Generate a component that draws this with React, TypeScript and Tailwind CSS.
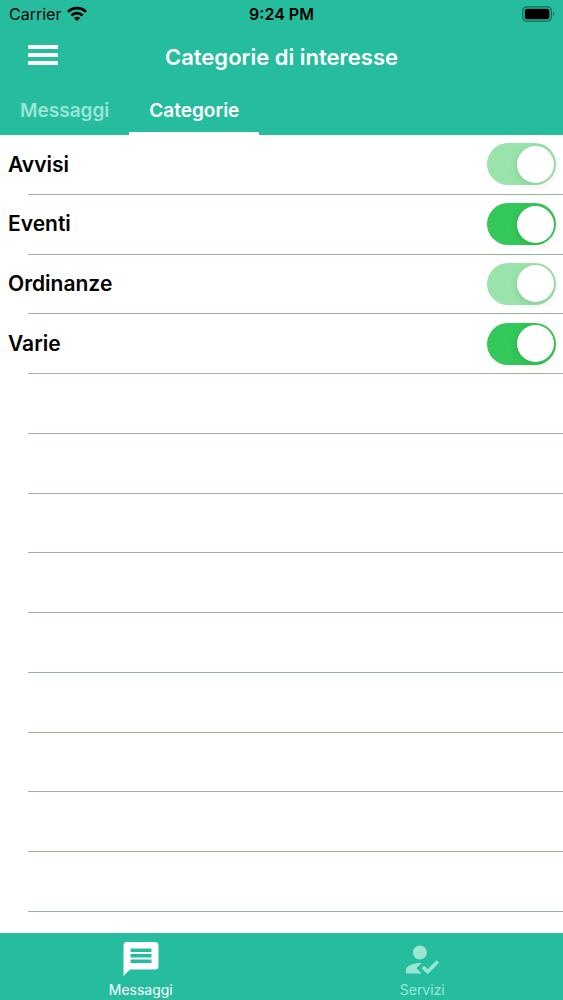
import React, { useState } from 'react';

interface Category {
  id: string;
  name: string;
  locked: boolean;
}

const CATEGORIES: Category[] = [
  { id: 'avvisi', name: 'Avvisi', locked: true },
  { id: 'eventi', name: 'Eventi', locked: false },
  { id: 'ordinanze', name: 'Ordinanze', locked: true },
  { id: 'varie', name: 'Varie', locked: false },
];

const EMPTY_ROWS = 9;

const StatusBar = () => (
  <div className="grid grid-cols-3 items-center h-7 px-2 text-black">
    <div className="flex items-center gap-1.5 pl-px text-base">
      <span>Carrier</span>
      <svg viewBox="0 0 20 15" className="w-5 h-4" fill="none" stroke="currentColor" strokeWidth="2.7">
        <path d="M1 5.4C6 .4 14 .4 19 5.4" />
        <path d="M4.4 9C7.6 5.9 12.4 5.9 15.6 9" />
        <path d="M10 14.6L6.9 11.5C8.6 9.9 11.4 9.9 13.1 11.5Z" fill="currentColor" stroke="none" />
      </svg>
    </div>
    <span className="text-center text-base font-semibold">9:24 PM</span>
    <svg viewBox="0 0 33 16" className="w-[33px] h-4 justify-self-end">
      <rect x="0.8" y="0.8" width="28.6" height="14.4" rx="4" fill="none" stroke="#0b6b58" strokeWidth="1.2" />
      <rect x="2.8" y="2.8" width="24.6" height="10.4" rx="2" />
      <path d="M31 5.5c1.6.8 1.6 4.2 0 5z" fill="#0b6b58" />
    </svg>
  </div>
);

interface SwitchProps {
  id: string;
  checked: boolean;
  disabled: boolean;
  onChange: () => void;
}

const Switch: React.FC<SwitchProps> = ({ id, checked, disabled, onChange }) => (
  <input
    id={id}
    type="checkbox"
    role="switch"
    checked={checked}
    disabled={disabled}
    onChange={onChange}
    className="flex items-center appearance-none w-[69px] h-[42px] p-[2px] rounded-full bg-gray-200 checked:bg-[#34c759] checked:disabled:bg-[#9ae3ac] checked:justify-end before:size-[37px] before:rounded-full before:bg-white before:shadow-[0_2px_8px_rgba(0,0,0,0.12)]"
  />
);

const MessageIcon = () => (
  <svg viewBox="0 0 36 34" className="w-9 h-[34px]" fill="currentColor" fillRule="evenodd">
    <path d="M4 0h28a3.5 3.5 0 0 1 3.5 3.5v20.5a3.5 3.5 0 0 1-3.5 3.5H7L.5 34V3.5A3.5 3.5 0 0 1 4 0zM7.5 6.5v3.5h21v-3.5zM7.5 12v3.5h21v-3.5zM7.5 17.5v3.5h21v-3.5z" />
  </svg>
);

const ServicesIcon = () => (
  <svg viewBox="2.5 2 20 19.5" className="w-[35px] h-[34px]" fill="currentColor">
    <circle cx="11" cy="8" r="4" />
    <path d="M9 17l3-2.94c-.39-.04-.68-.06-1-.06-2.67 0-8 1.34-8 4v2h9z" />
    <path d="M15.47 20.5L12 17l1.4-1.41 2.07 2.08 5.13-5.17 1.4 1.42z" />
  </svg>
);

export default function App() {
  const [enabled, setEnabled] = useState<Record<string, boolean>>({
    avvisi: true,
    eventi: true,
    ordinanze: true,
    varie: true,
  });

  const toggle = (id: string) => setEnabled((prev) => ({ ...prev, [id]: !prev[id] }));

  return (
    <div className="flex flex-col min-h-screen bg-white font-['Inter','Liberation_Sans',sans-serif]">
      <header className="bg-[#26bd9f] text-white">
        <StatusBar />
        <div className="grid grid-cols-[72px_1fr_72px] items-center h-[58px]">
          <button type="button" aria-label="Menu" className="flex flex-col gap-1 pl-7 pb-1">
            <span className="w-[30px] h-1 bg-white" />
            <span className="w-[30px] h-1 bg-white" />
            <span className="w-[30px] h-1 bg-white" />
          </button>
          <h1 className="text-center text-[22px] font-semibold">Categorie di interesse</h1>
        </div>
        <nav className="flex h-[49px] text-[19px] font-semibold">
          <button type="button" className="px-5 pt-1 text-[#9ae6d5] border-b-3 border-transparent">Messaggi</button>
          <button type="button" className="px-5 pt-1 border-b-3 border-white">Categorie</button>
        </nav>
      </header>

      <main className="flex flex-col flex-1 pb-[21px]">
        {CATEGORIES.map((category) => (
          <div key={category.id} className="flex flex-col grow basis-[59px]">
            <div className="flex items-center justify-between flex-1 pl-2 pr-[7px]">
              <label htmlFor={category.id} className="text-[21px] font-semibold text-black">
                {category.name}
              </label>
              <Switch
                id={category.id}
                checked={enabled[category.id]}
                disabled={category.locked}
                onChange={() => toggle(category.id)}
              />
            </div>
            <div className="ml-7 h-px bg-[#93b893]" />
          </div>
        ))}
        {Array.from({ length: EMPTY_ROWS }, (_, i) => (
          <div key={i} className="grow basis-[59px] ml-7 border-b border-[#93b893]" />
        ))}
      </main>

      <footer className="grid grid-cols-2 h-[67px] bg-[#26bd9f] text-sm text-white">
        <button type="button" className="flex flex-col items-center justify-end gap-1">
          <MessageIcon />
          <span>Messaggi</span>
        </button>
        <button type="button" className="flex flex-col items-center justify-end gap-1 text-[#9ae6d5]">
          <ServicesIcon />
          <span>Servizi</span>
        </button>
      </footer>
    </div>
  );
}
